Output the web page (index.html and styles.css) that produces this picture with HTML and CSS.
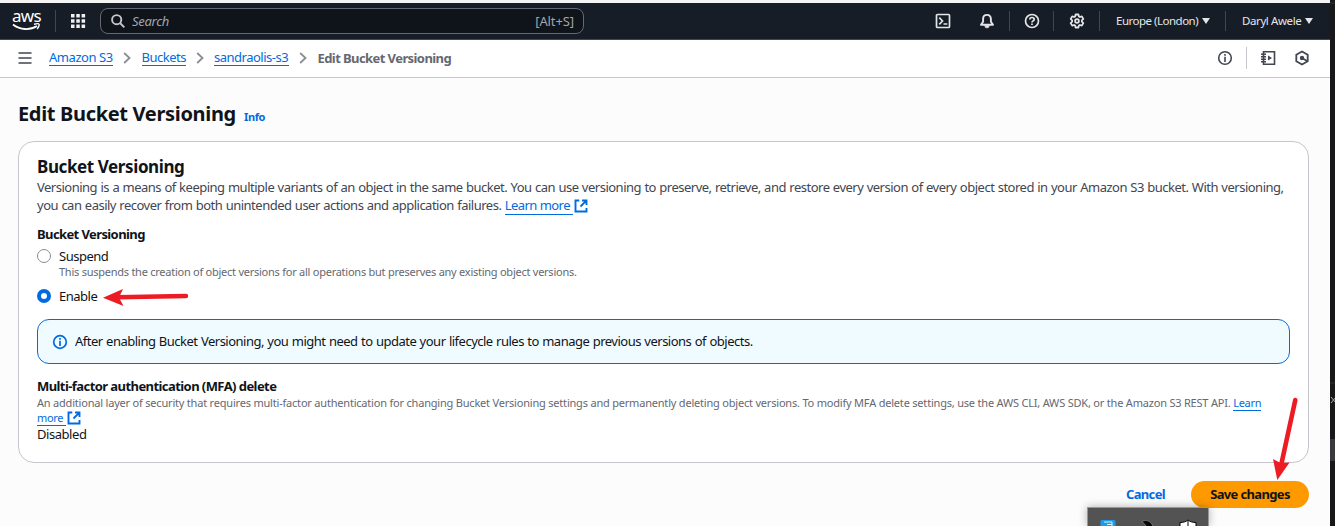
FILE: index.html
```html
<!DOCTYPE html>
<html lang="en">
<head>
<meta charset="utf-8">
<title>Edit Bucket Versioning</title>
<link rel="stylesheet" href="styles.css">
</head>
<body>
<div class="window">
<div class="app">
  <header class="topbar">
    <div class="aws"><span class="aws-word">aws</span><svg class="smile" width="29" height="9" viewBox="0 0 29 9" fill="none" stroke="#fff"><path d="M1 1.500C8 7 18 7.500 25 3" stroke-width="1.800"/><path d="M22 1.300c3-.8 4.900-.6 5.100.1.200.9-.5 3-2 4.500" stroke-width="1.400"/></svg></div>
    <i class="rule rule-logo"></i>
    <svg class="grid-icon" width="16" height="16" viewBox="0 0 16 16" fill="#f0f0f2"><path d="M1 1h3.500v3.500H1zM6.300 1h3.500v3.500H6.300zM11.600 1h3.500v3.500h-3.500zM1 6.300h3.500v3.500H1zM6.300 6.300h3.500v3.500H6.300zM11.600 6.300h3.500v3.500h-3.500zM1 11.600h3.500v3.500H1zM6.300 11.600h3.500v3.500H6.300zM11.600 11.600h3.500v3.500h-3.500z"/></svg>
    <div class="search">
      <svg width="14" height="14" viewBox="0 0 14 14" fill="none" stroke="#c6c6cd" stroke-width="1.900"><circle cx="5.700" cy="5.700" r="4.600"/><path d="M9 9l4.300 4.300"/></svg>
      <span class="placeholder">Search</span><span class="shortcut">[Alt+S]</span>
    </div>
    <nav class="tools">
      <svg class="t-shell" width="16" height="16" viewBox="0 0 16 16" fill="none" stroke="#e3e5e8" stroke-width="1.700"><rect x="1.500" y="1.500" width="13" height="13" rx="1"/><path d="M4.300 4.700L7.500 8l-3.200 3.300M8.500 11h3.800"/></svg>
      <svg class="t-bell" width="16" height="16" viewBox="0 0 16 16" fill="none" stroke="#e3e5e8" stroke-width="1.900" stroke-linejoin="round"><path d="M8 1.900c-2.600 0-3.900 1.700-3.900 4v2.900L2 11.800h12l-2.100-3V5.900c0-2.300-1.300-4-3.900-4z"/><path d="M5.500 12.500h5L9.300 14.800H6.700z" fill="#e3e5e8" stroke-width=".6"/></svg>
      <i class="rule"></i>
      <svg class="t-help" width="16" height="16" viewBox="0 0 16 16" fill="none" stroke="#e3e5e8" stroke-width="1.700"><circle cx="8" cy="8" r="6.500"/><path d="M5.800 6.600C5.800 5.200 6.700 4.500 8 4.500s2.200.8 2.200 1.900C10.200 8 8 7.800 8 9.500M8 10.500v1.600"/></svg>
      <i class="rule"></i>
      <svg class="t-gear" width="16" height="16" viewBox="0 0 16 16" fill="none" stroke="#e3e5e8" stroke-width="1.800" stroke-linejoin="round"><path d="M6.600 1.500h2.800l.5 1.900 1 .6 1.900-.6 1.500 2.500-1.400 1.400v1.400l1.400 1.400-1.500 2.500-1.900-.6-1 .6-.5 1.900H6.600l-.5-1.900-1-.6-1.900.6-1.500-2.500 1.400-1.400V7.300L1.700 5.900l1.500-2.500 1.900.6 1-.6z"/><circle cx="8" cy="8" r="1.900"/></svg>
      <i class="rule"></i>
      <span class="region">Europe (London)</span><i class="caret"></i>
      <i class="rule rule-user"></i>
      <span class="user">Daryl Awele</span><i class="caret"></i>
    </nav>
  </header>

  <div class="crumbs">
    <svg class="burger" width="14" height="14" viewBox="0 0 14 14" stroke="#424650" stroke-width="1.700"><path d="M.5 2h13M.5 7h13M.5 12h13"/></svg>
    <a class="c1">Amazon S3</a><svg class="chev" width="8" height="12" viewBox="0 0 8 12"><path d="M1.200 1L6.500 6l-5.300 5"/></svg>
    <a class="c2">Buckets</a><svg class="chev" width="8" height="12" viewBox="0 0 8 12"><path d="M1.200 1L6.500 6l-5.300 5"/></svg>
    <a class="c3">sandraolis-s3</a><svg class="chev" width="8" height="12" viewBox="0 0 8 12"><path d="M1.200 1L6.500 6l-5.300 5"/></svg>
    <b class="c4">Edit Bucket Versioning</b>
    <div class="panel-tools">
      <svg width="16" height="16" viewBox="0 0 16 16" fill="none" stroke="#424650" stroke-width="1.600"><circle cx="8" cy="8" r="6.300"/><path d="M8 4v1.700M8 6.800V12"/></svg>
      <i class="divider"></i>
      <svg width="16" height="16" viewBox="0 0 16 16" fill="none" stroke="#424650" stroke-width="1.600"><path d="M3.500 1.700h11v12.600h-11zM1 4.300h5M1 6.800h5M1 9.300h5M1 11.800h5"/><path d="M8 5.500v5L12 8z" fill="#424650" stroke="none"/></svg>
      <svg class="hex" width="16" height="16" viewBox="0 0 16 16" fill="none" stroke="#424650" stroke-width="1.800"><path d="M8 1.500l5.700 3.200v6.600L8 14.500l-5.700-3.200V4.700z"/><circle cx="8" cy="8" r="2.200" fill="#424650" stroke="none"/><path d="M8 8l5 3"/></svg>
    </div>
  </div>

  <main>
    <div class="heading"><h1>Edit Bucket Versioning</h1><a class="info">Info</a></div>
    <section class="card">
      <h2>Bucket Versioning</h2>
      <p class="desc"><span class="d1">Versioning is a means of keeping multiple variants of an object in the same bucket. You can use versioning to preserve, retrieve, and restore every version of every object stored in your Amazon S3 bucket. With versioning,</span><br><span class="d2">you can easily recover from both unintended user actions and application failures. </span><a class="link learn more">Learn more</a><svg class="ext" width="14" height="14" viewBox="0 0 14 14" fill="none" stroke="#006ce0" stroke-width="1.900"><path d="M5.300 1.500H1.500v11h11V9M8 1.500h4.500V6M12.300 1.700L6.500 7.500"/></svg></p>
      <h3>Bucket Versioning</h3>
      <div class="option"><i class="radio"></i><span class="suspend">Suspend</span></div>
      <p class="hint">This suspends the creation of object versions for all operations but preserves any existing object versions.</p>
      <div class="option"><i class="radio on"></i><span class="enable">Enable</span></div>
      <div class="alert"><svg width="16" height="16" viewBox="0 0 16 16" fill="none" stroke="#006ce0" stroke-width="1.700"><circle cx="8" cy="8" r="6.300"/><path d="M8 4v1.700M8 6.800V12"/></svg><span>After enabling Bucket Versioning, you might need to update your lifecycle rules to manage previous versions of objects.</span></div>
      <h3 class="mfa">Multi-factor authentication (MFA) delete</h3>
      <p class="mfa-text"><span class="m1">An additional layer of security that requires multi-factor authentication for changing Bucket Versioning settings and permanently deleting object versions. To modify MFA delete settings, use the AWS CLI, AWS SDK, or the Amazon S3 REST API. </span><a class="link">Learn</a><br><a class="link more">more</a><svg class="ext" width="14" height="14" viewBox="0 0 14 14" fill="none" stroke="#006ce0" stroke-width="1.900"><path d="M5.300 1.500H1.500v11h11V9M8 1.500h4.500V6M12.300 1.700L6.500 7.500"/></svg></p>
      <div class="state">Disabled</div>
    </section>
    <div class="actions"><a class="cancel">Cancel</a><button class="save"><span>Save changes</span></button></div>
  </main>
</div>
<aside class="edge"><svg width="5" height="526" viewBox="0 0 5 526"><path d="M0 3h5M0 383h5" stroke="#303030"/><path d="M0 439h5v22H0z" fill="#39393d"/><path d="M1 397l5 6M1 403l5-6" stroke="#aaa"/></svg></aside>
</div>
<svg class="marks" width="1335" height="526" viewBox="0 0 1335 526" fill="#ed1c24" stroke="#ed1c24" stroke-linecap="round"><path d="M118 297.300L186 296" stroke-width="4.400"/><path d="M103 297.800L123 289l-4 8.500 4.500 8.500z" stroke="none"/><path d="M1295.300 400L1280.500 468" stroke-width="4.600"/><path d="M1277.300 480L1273 459l7.500 4 9-.5z" stroke="none"/></svg>
<div class="tray">
  <svg width="120" height="18" viewBox="0 0 120 18"><rect x="12.500" y="12" width="15" height="7" rx="1.500" fill="#1c9be8"/><path d="M16 14h8v4M19 16.500h5" stroke="#d9f3ff" fill="none"/><path d="M54 13.500c4-2.500 10 0 11 5.500h-7c0-3-2-3-4-5.500z" fill="#050505" stroke="#aaa" stroke-width=".5"/><path d="M92 19v-4.500c4 0 6-1 8-2.500 2 1.500 4 2.500 8 2.500V19z" fill="#fff" stroke="#000"/><path d="M100 13v6" stroke="#000"/></svg>
</div>
</body>
</html>
```
FILE: styles.css
```css
* { box-sizing: border-box; }
body { margin: 0; width: 1335px; height: 526px; overflow: hidden; position: relative; background: #fcfcfd; color: #0f141a; font: 13px/18px "Noto Sans", sans-serif; white-space: nowrap; }
h1, h2, h3, p { margin: 0; }
svg, i, span, a, b { flex-shrink: 0; }
svg { display: block; }
.window { display: flex; height: 526px; }
.app { width: 1330px; display: flex; flex-direction: column; }
.edge { width: 5px; background: #18181a; }
.topbar { height: 40px; border-top: 3px solid #f4f4f5; border-bottom: 1px solid #424650; background: #161d26; display: flex; align-items: center; padding-left: 12px; }
.aws { width: 29px; height: 24px; display: flex; flex-direction: column; align-items: center; color: #fff; }
.aws-word { font-size: 17px; line-height: 14px; height: 14px; letter-spacing: -.6px; }
.rule { width: 1px; height: 20px; background: #424650; }
.rule-logo { margin-left: 14px; height: 22px; }
.grid-icon { margin-left: 14px; }
.search { margin-left: 14px; width: 484px; height: 26px; border: 1px solid #656871; border-radius: 8px; background: #0f141a; display: flex; align-items: center; padding: 0 9px 0 10px; color: #a4a4ad; }
.search span { margin-top: -1px; }
.search .placeholder { margin-left: 7px; font-style: italic; letter-spacing: -.3px; }
.search .shortcut { margin-left: auto; letter-spacing: -.1px; }
.tools { margin-left: auto; display: flex; align-items: center; color: #e3e5e8; font-size: 11.5px; padding-right: 17px; }
.t-bell { margin: 0 14px 0 28px; }
.t-help { margin: 0 13px 0 14px; }
.t-gear { margin: 0 14px 0 15px; }
.region { margin-left: 16px; width: 82px; letter-spacing: -.5px; }
.user { margin-left: 16px; width: 59px; letter-spacing: -.4px; }
.caret { margin-left: 4px; border: 4px solid transparent; border-top: 6px solid #e3e5e8; border-bottom: 0; }
.rule-user { margin-left: 15px; }
.crumbs { height: 38px; background: #fff; border-bottom: 1px solid #c6c6cd; display: flex; align-items: center; padding: 0 20px 1px 18px; color: #656871; }
.crumbs a { color: #006ce0; border-bottom: 1px solid #006ce0; line-height: 15px; height: 16px; }
.c1 { margin-left: 17px; width: 64px; letter-spacing: -.45px; }
.c2 { width: 44px; letter-spacing: -.5px; }
.c3 { width: 75px; letter-spacing: -.5px; }
.c4 { letter-spacing: -.58px; margin-top: -1px; }
.chev { margin: 0 10.500px 0 10px; fill: none; stroke: #8c8c94; stroke-width: 1.8; }
.panel-tools { margin-left: auto; display: flex; align-items: center; }
.divider { width: 1px; height: 22px; background: #c6c6cd; margin: 0 13px; }
.hex { margin-left: 18px; }
main { padding: 23px 21px 0 18px; }
.heading { height: 40px; display: flex; align-items: baseline; }
h1 { font-size: 20px; line-height: 26px; letter-spacing: -.33px; width: 219px; font-weight: 700; }
.info { margin-left: 7px; color: #006ce0; font-size: 11px; font-weight: 700; letter-spacing: -.4px; }
.card { height: 322px; border: 1px solid #c6c6cd; border-radius: 16px; background: #fff; padding: 14px 18px 0; }
h2 { font-size: 17px; line-height: 22px; letter-spacing: -.4px; }
.desc { color: #424650; height: 36px; }
.d1, .d2 { letter-spacing: -.5px; word-spacing: .47px; }
.link { color: #006ce0; border-bottom: 1px solid #006ce0; letter-spacing: -.3px; }
.learn { letter-spacing: -.55px; }
.more { padding-right: 3px; }
.ext { display: inline-block; vertical-align: -3px; margin-left: 1px; }
h3 { font-size: 13px; line-height: 18px; margin-top: 11px; letter-spacing: -.6px; }
.option { display: flex; align-items: center; height: 18px; letter-spacing: -.5px; margin-top: 4px; }
.radio { width: 14px; height: 14px; border-radius: 50%; border: 1px solid #8c8c94; margin-right: 8px; background: #fff; }
.radio.on { border: 4px solid #006ce0; }
.enable { margin-top: -1px; }
.hint { color: #656871; font-size: 11px; line-height: 15px; padding-left: 22px; letter-spacing: -.25px; margin: -1px 0 8px; }
.alert { margin-top: 14px; height: 45px; border: 1px solid #006ce0; border-radius: 12px; background: #f0fbff; display: flex; align-items: center; padding-left: 14px; gap: 7px; letter-spacing: -.5px; word-spacing: .5px; }
.alert span { margin-top: -1px; }
.mfa { margin-top: 13px; letter-spacing: -.57px; }
.mfa-text { color: #656871; font-size: 11px; line-height: 15px; height: 30px; }
.m1 { letter-spacing: -.2px; }
.state { letter-spacing: -.45px; }
.actions { display: flex; justify-content: flex-end; align-items: center; margin-top: 18px; height: 27px; font-weight: 700; }
.cancel { color: #006ce0; margin: -2px 26px 0 0; letter-spacing: -.65px; }
.save { border: 0; border-radius: 14px; width: 118px; height: 27px; background: #ff9900; color: #0f141a; font: inherit; padding: 0 0 2px; letter-spacing: -.65px; }
.marks { position: absolute; inset: 0; }
.tray { position: absolute; left: 1087px; top: 507px; width: 122px; height: 19px; background: #535353; border: 1px solid #999; border-bottom: 0; box-shadow: 0 0 9px rgba(0,0,0,.3); overflow: hidden; }
```
